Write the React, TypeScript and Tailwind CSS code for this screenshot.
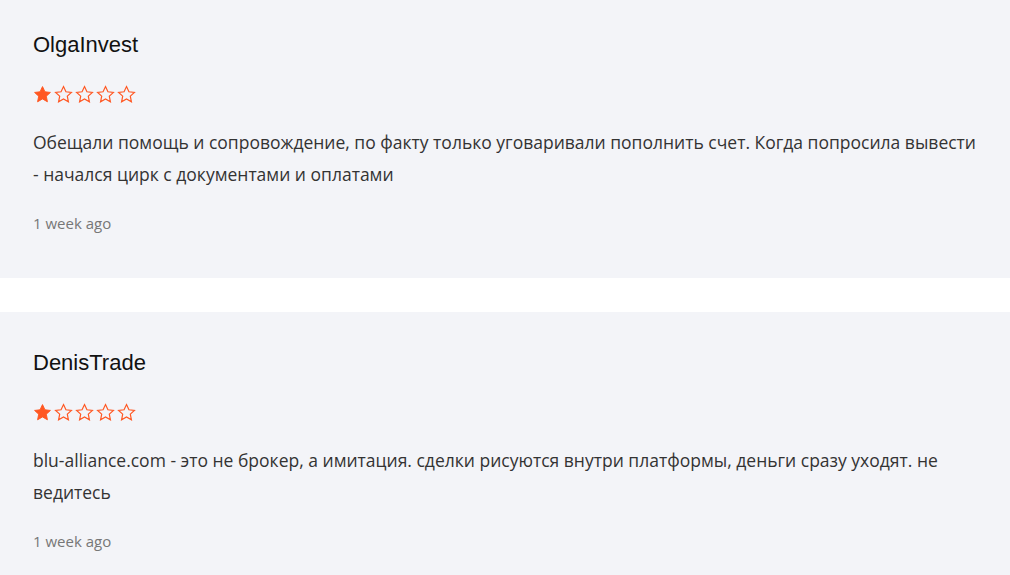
import React from "react";

type Review = {
  id: number;
  author: string;
  rating: number;
  text: string;
  time: string;
};

const reviews: Review[] = [
  {
    id: 1,
    author: "OlgaInvest",
    rating: 1,
    text: "Обещали помощь и сопровождение, по факту только уговаривали пополнить счет. Когда попросила вывести - начался цирк с документами и оплатами",
    time: "1 week ago",
  },
  {
    id: 2,
    author: "DenisTrade",
    rating: 1,
    text: "blu-alliance.com - это не брокер, а имитация. сделки рисуются внутри платформы, деньги сразу уходят. не ведитесь",
    time: "1 week ago",
  },
];

function Star({ filled }: { filled: boolean }) {
  return (
    <svg
      width="19"
      height="19"
      viewBox="0 0 24 24"
      className="shrink-0"
      fill={filled ? "#ff5722" : "none"}
      stroke="#ff5722"
      strokeWidth={filled ? 1.2 : 1.5}
      strokeLinejoin="miter"
    >
      <polygon points="12,2 15.09,8.6 22,9.4 16.8,14.1 18.2,21.2 12,17.6 5.8,21.2 7.2,14.1 2,9.4 8.91,8.6" />
    </svg>
  );
}

function ReviewCard({ review }: { review: Review }) {
  return (
    <div className="bg-[#f3f4f8] pl-[33px] pr-[33px] pt-[37px] pb-[45px]">
      <div className="text-[22px] leading-[28px] text-[#111] font-['Liberation_Sans',Arial,sans-serif]">
        {review.author}
      </div>
      <div className="mt-[26px] flex h-[19px] items-center gap-[2px]">
        {[1, 2, 3, 4, 5].map((n) => (
          <Star key={n} filled={n <= review.rating} />
        ))}
      </div>
      <p className="mt-[22px] text-[17.5px] leading-[32px] text-[#333] font-['Open_Sans',sans-serif]">
        {review.text}
      </p>
      <div className="mt-[23px] text-[15px] leading-[20px] text-[#777] font-['Open_Sans',sans-serif]">
        {review.time}
      </div>
    </div>
  );
}

export default function App() {
  return (
    <div className="min-h-[575px] w-[1010px] overflow-hidden bg-white">
      <div className="-mt-[6px] flex flex-col gap-[34px]">
        {reviews.map((r) => (
          <ReviewCard key={r.id} review={r} />
        ))}
      </div>
    </div>
  );
}
